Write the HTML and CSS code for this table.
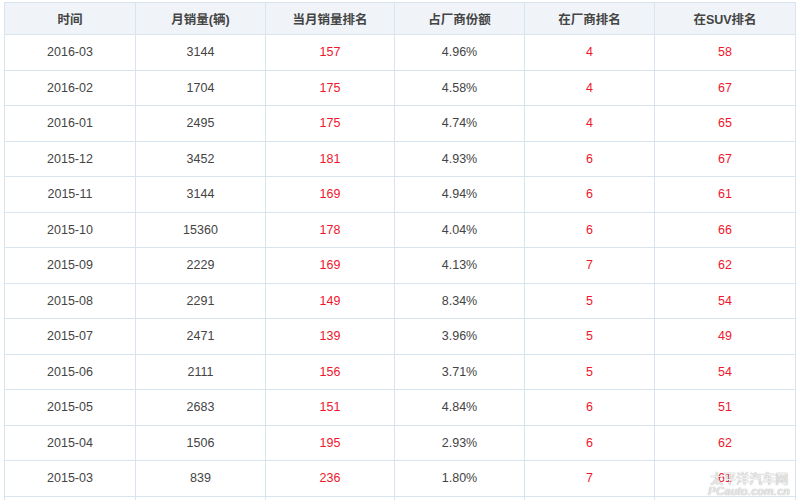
FILE: index.html
```html
<!DOCTYPE html>
<html lang="zh-CN">
<head>
<meta charset="utf-8">
<title>销量排名</title>
<link rel="stylesheet" href="styles.css">
</head>
<body>
<div class="wrap">
<table class="sales">
<colgroup>
<col class="c1"><col class="c2"><col class="c3"><col class="c4"><col class="c5"><col class="c6">
</colgroup>
<thead>
<tr><th>时间</th><th>月销量(辆)</th><th>当月销量排名</th><th>占厂商份额</th><th>在厂商排名</th><th>在SUV排名</th></tr>
</thead>
<tbody>
<tr><td>2016-03</td><td>3144</td><td class="red">157</td><td>4.96%</td><td class="red">4</td><td class="red">58</td></tr>
<tr><td>2016-02</td><td>1704</td><td class="red">175</td><td>4.58%</td><td class="red">4</td><td class="red">67</td></tr>
<tr><td>2016-01</td><td>2495</td><td class="red">175</td><td>4.74%</td><td class="red">4</td><td class="red">65</td></tr>
<tr><td>2015-12</td><td>3452</td><td class="red">181</td><td>4.93%</td><td class="red">6</td><td class="red">67</td></tr>
<tr><td>2015-11</td><td>3144</td><td class="red">169</td><td>4.94%</td><td class="red">6</td><td class="red">61</td></tr>
<tr><td>2015-10</td><td>15360</td><td class="red">178</td><td>4.04%</td><td class="red">6</td><td class="red">66</td></tr>
<tr><td>2015-09</td><td>2229</td><td class="red">169</td><td>4.13%</td><td class="red">7</td><td class="red">62</td></tr>
<tr><td>2015-08</td><td>2291</td><td class="red">149</td><td>8.34%</td><td class="red">5</td><td class="red">54</td></tr>
<tr><td>2015-07</td><td>2471</td><td class="red">139</td><td>3.96%</td><td class="red">5</td><td class="red">49</td></tr>
<tr><td>2015-06</td><td>2111</td><td class="red">156</td><td>3.71%</td><td class="red">5</td><td class="red">54</td></tr>
<tr><td>2015-05</td><td>2683</td><td class="red">151</td><td>4.84%</td><td class="red">6</td><td class="red">51</td></tr>
<tr><td>2015-04</td><td>1506</td><td class="red">195</td><td>2.93%</td><td class="red">6</td><td class="red">62</td></tr>
<tr><td>2015-03</td><td>839</td><td class="red">236</td><td>1.80%</td><td class="red">7</td><td class="red">61</td></tr>
<tr><td></td><td></td><td></td><td></td><td></td><td></td></tr>
</tbody>
</table>
<div class="watermark"><span class="wm-cn">太平洋汽车网</span><span class="wm-en">PCauto.com.cn</span></div>
</div>
</body>
</html>
```
FILE: styles.css
```css
html, body {
  margin: 0;
  padding: 0;
  background: #ffffff;
  overflow: hidden;
}
body {
  width: 800px;
  height: 500px;
  font-family: "Liberation Sans", "Noto Sans CJK SC", sans-serif;
  font-size: 12.5px;
  color: #444444;
}
.wrap {
  position: relative;
  width: 800px;
  height: 500px;
  padding: 2px 0 0 4px;
  box-sizing: border-box;
  overflow: hidden;
}
.sales {
  border-collapse: collapse;
  table-layout: fixed;
  width: 791px;
}
.c1 { width: 131px; }
.c2 { width: 130px; }
.c3 { width: 129px; }
.c4 { width: 130px; }
.c5 { width: 130px; }
.c6 { width: 141px; }
.sales th, .sales td {
  border: 1px solid #d9e5ee;
  text-align: center;
  padding: 0;
}
.sales th {
  height: 31px;
  background: #f0f4f8;
  font-weight: bold;
  color: #444444;
}
.sales tbody tr {
  height: 35.5px;
}
.sales td.red {
  color: #f0162c;
}
.watermark {
  position: absolute;
  right: 10px;
  bottom: 3px;
  display: flex;
  flex-direction: column;
  align-items: center;
  color: rgba(255, 255, 255, 0.85);
  text-shadow: 0 0 1px rgba(140, 140, 140, 0.7), 0 0 1px rgba(140, 140, 140, 0.7);
  line-height: 1;
}
.wm-cn {
  font-size: 13px;
  font-family: "Noto Sans CJK SC", sans-serif;
}
.wm-en {
  font-size: 11px;
  font-style: italic;
  letter-spacing: 0.5px;
  margin-top: 2px;
}
```
